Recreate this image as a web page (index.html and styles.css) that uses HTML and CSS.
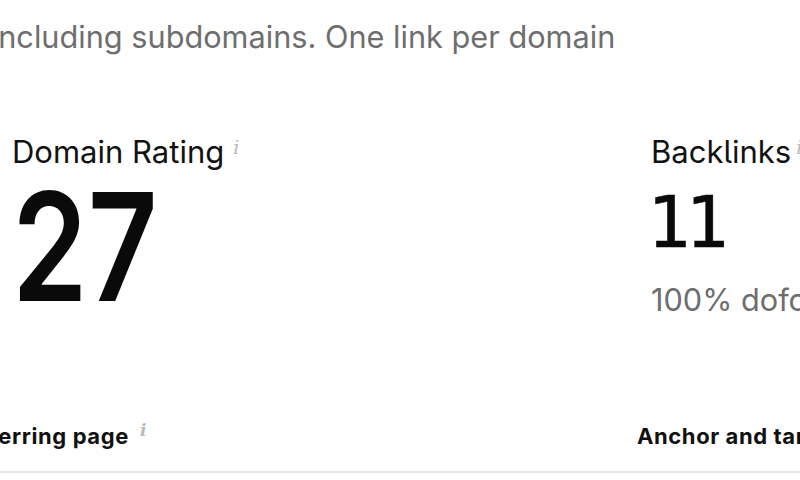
FILE: index.html
```html
<!DOCTYPE html>
<html>
<head>
<meta charset="utf-8">
<link rel="stylesheet" href="styles.css">
</head>
<body>
<div class="page">
  <p class="subtitle">Including subdomains. One link per domain</p>
  <div class="metrics">
    <div class="metric dr">
      <div class="metric-title">Domain Rating<span class="info">i</span></div>
      <div class="metric-value big"><span class="digits">27</span></div>
    </div>
    <div class="metric bl">
      <div class="metric-title">Backlinks<span class="info tight">i</span></div>
      <div class="metric-value mono">11</div>
      <div class="metric-sub">100% dofollow</div>
    </div>
  </div>
  <div class="table-head">
    <div class="th th-ref">Referring page<span class="info small">i</span></div>
    <div class="th th-anchor">Anchor and target URL</div>
  </div>
</div>
</body>
</html>
```
FILE: styles.css
```css
html, body {
  margin: 0;
  padding: 0;
  background: #fff;
}
body {
  width: 800px;
  height: 480px;
  overflow: hidden;
  font-family: Inter, "Noto Sans", sans-serif;
  color: #111;
}
.page {
  width: 900px;
  margin-left: -10px;
}
.subtitle {
  margin: 0;
  padding-top: 17px;
  font-size: 30.7px;
  line-height: 40px;
  color: #6e6e6e;
  white-space: nowrap;
}
.metrics {
  display: grid;
  grid-template-columns: 639px 1fr;
  align-items: start;
  padding-left: 22px;
  margin-top: 77px;
}
.metric-title {
  font-size: 31px;
  line-height: 36px;
  font-feature-settings: "ss02" 1;
  white-space: nowrap;
  color: #121212;
}
.info {
  font-family: "DejaVu Serif", serif;
  font-style: italic;
  font-size: 19px;
  line-height: 0;
  color: #b8b8b8;
  vertical-align: 9px;
  margin-left: 9px;
}
.info.tight {
  margin-left: 5px;
}
.metric-value.big {
  font-size: 150px;
  line-height: 150px;
  font-weight: 600;
  margin-top: 2px;
  color: #0a0a0a;
}
.digits {
  display: inline-block;
  transform: scaleX(0.81);
  transform-origin: 0 50%;
}
.metric-value.mono {
  font-family: "DejaVu Sans Mono", monospace;
  font-size: 72px;
  line-height: 60px;
  letter-spacing: -5px;
  -webkit-text-stroke: 0.6px #0a0a0a;
  color: #0a0a0a;
  margin-top: 22px;
  margin-left: -4px;
}
.metric-sub {
  font-size: 30.7px;
  line-height: 40px;
  color: #6e6e6e;
  white-space: nowrap;
  margin-top: 28px;
}
.table-head {
  display: grid;
  grid-template-columns: 676px 1fr;
  margin-left: -29px;
  margin-top: 99px;
  padding-bottom: 20px;
  border-bottom: 2px solid #e4e4e4;
}
.th {
  font-size: 22px;
  font-weight: 700;
  line-height: 30px;
  letter-spacing: 0.6px;
  white-space: nowrap;
  color: #111;
}
.info.small {
  font-size: 17px;
  letter-spacing: 0;
  vertical-align: 8px;
  margin-left: 11px;
}
```
